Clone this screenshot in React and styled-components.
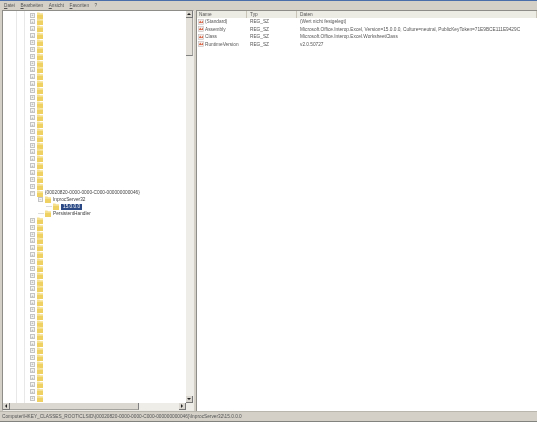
import React from 'react'
import styled, { createGlobalStyle } from 'styled-components'

const GlobalStyle = createGlobalStyle`
  html, body {
    margin: 0;
    padding: 0;
    background: #fff;
    overflow: hidden;
  }
`

const Window = styled.div`
  width: 537px;
  height: 426px;
  display: flex;
  flex-direction: column;
  font-family: Tahoma, "Liberation Sans", Arial, sans-serif;
  font-size: 4.75px;
  color: #333;
  filter: blur(0.35px);
`

const TitleEdge = styled.div`
  height: 1px;
  background: #4a6ea9;
`

const Menu = styled.div`
  height: 9px;
  display: flex;
  align-items: center;
  gap: 5.5px;
  padding-left: 4px;
  background: #d4d0c8;
  font-size: 4.7px;
  color: #555;
`

const MenuItem = styled.span`
  &::first-letter {
    text-decoration: underline;
  }
`

const Panes = styled.div`
  height: 401px;
  display: flex;
  gap: 2px;
  padding-left: 2px;
  background: #d4d0c8;
`

const TreePane = styled.div`
  width: 192px;
  display: grid;
  grid-template-columns: 1fr 7px;
  grid-template-rows: 1fr 7px;
  border: 1px solid #8f8d87;
  border-bottom-color: #eeece6;
  border-right-color: #eeece6;
  box-sizing: border-box;
  background: #fff;
  min-height: 0;
`

const TreeBody = styled.div`
  overflow: hidden;
  min-height: 0;
  padding-top: 0.7px;
  background-image:
    linear-gradient(#e8e8e8, #e8e8e8),
    linear-gradient(#e8e8e8, #e8e8e8);
  background-size: 1px 100%;
  background-position: 13px 0, 21px 0;
  background-repeat: no-repeat;
`

const TreeRow = styled.div`
  height: 6.85px;
  display: flex;
  align-items: center;
  gap: 1px;
  padding-left: ${p => p.$depth * 8 + 27}px;
`

const Toggle = styled.span`
  width: 5px;
  height: 5px;
  flex: none;
  display: flex;
  align-items: center;
  justify-content: center;
  border: 0.5px solid #c4c4c4;
  box-sizing: border-box;
  background: #f4f4f2;
  font-size: 4px;
  line-height: 1;
  color: #888;
  margin-right: 1px;
`

const Spacer = styled.span`
  width: 6px;
  flex: none;
  border-top: 0.5px solid #dcdcdc;
`

const RowLabel = styled.span`
  white-space: nowrap;
  margin-left: ${p => (p.$selected ? 1 : 0)}px;
  padding: 0 ${p => (p.$selected ? 2 : 1)}px;
  line-height: 6px;
  background: ${p => (p.$selected ? '#2b4a85' : 'transparent')};
  color: ${p => (p.$selected ? '#fff' : '#444')};
`

const VScroll = styled.div`
  display: flex;
  flex-direction: column;
  background: #eeede8;
`

const VThumb = styled.div`
  height: 38px;
  background: #e2e0d9;
  border-right: 0.6px solid #a5a39d;
  border-bottom: 1px solid #808080;
  box-sizing: border-box;
`

const VTrack = styled.div`
  flex: 1;
`

const HScroll = styled.div`
  display: flex;
  background: #eeede8;
`

const HThumb = styled.div`
  width: 129px;
  background: #dad8d0;
  border-right: 1px solid #808080;
  border-bottom: 0.6px solid #a5a39d;
  box-sizing: border-box;
`

const HTrack = styled.div`
  flex: 1;
`

const Corner = styled.div`
  background: #eeede8;
`

const ArrowButton = styled.div`
  width: 7px;
  height: 7px;
  flex: none;
  display: flex;
  align-items: center;
  justify-content: center;
  background: #dad8d0;
  border-right: 0.6px solid #777;
  border-bottom: 0.6px solid #777;
  box-sizing: border-box;
`

const ListPane = styled.div`
  flex: 1;
  background: #fff;
  border-left: 1px solid #8f8d87;
  border-top: 1px solid #8f8d87;
`

const ListGrid = styled.div`
  display: grid;
  grid-template-columns: 50px 50px 1fr;
  grid-template-rows: 7px;
  grid-auto-rows: 7.5px;
  align-items: center;
`

const HeaderCell = styled.div`
  height: 7px;
  line-height: 7px;
  padding-left: ${p => (p.$first ? 2 : 3)}px;
  background: #ecebe4;
  color: #555;
  border-right: 0.6px solid #c8c5b8;
`

const Cell = styled.div`
  display: flex;
  align-items: center;
  gap: 1px;
  padding-left: ${p => (p.$first ? 1 : 3)}px;
  white-space: nowrap;
  color: #555;
`

const StatusBar = styled.div`
  height: 11px;
  box-sizing: border-box;
  display: flex;
  align-items: center;
  padding: 0 0 1px 2px;
  background: #d4d0c8;
  border-top: 1px solid #b9b6ae;
  border-bottom: 1px solid #82827e;
  white-space: nowrap;
  overflow: hidden;
  color: #555;
`

const Folder = () => (
  <svg width="6" height="7" viewBox="0 0 6 7">
    <path d="M0 0.5h2.4l.6.8H6V7H0z" fill="#f5e08f" />
    <path d="M0 3h6v4H0z" fill="#efd063" />
  </svg>
)

const RegIcon = () => (
  <svg width="6" height="6" viewBox="0 0 6 6">
    <rect x="0.3" y="0.3" width="5.4" height="5.4" fill="#f4eeea" stroke="#b9b4b4" strokeWidth="0.5" />
    <path d="M1 3.6L2.4 1.5l1 2L5 1.5v2.4H1z" fill="#d9684a" />
  </svg>
)

const Arrow = ({ dir }) => (
  <svg width="4" height="4" viewBox="0 0 4 4">
    {dir === 'up' && <path d="M2 1L4 3H0z" fill="#222" />}
    {dir === 'down' && <path d="M2 3L4 1H0z" fill="#222" />}
    {dir === 'left' && <path d="M1 2L3 0v4z" fill="#222" />}
    {dir === 'right' && <path d="M3 2L1 0v4z" fill="#222" />}
  </svg>
)

const buildTree = () => {
  const rows = []
  for (let i = 0; i < 26; i++) rows.push({ depth: 0, toggle: '+' })
  rows.push({ depth: 0, toggle: '-', label: '{00020820-0000-0000-C000-000000000046}' })
  rows.push({ depth: 1, toggle: '-', label: 'InprocServer32' })
  rows.push({ depth: 2, label: '15.0.0.0', selected: true })
  rows.push({ depth: 1, label: 'PersistentHandler' })
  for (let i = 0; i < 27; i++) rows.push({ depth: 0, toggle: '+' })
  return rows
}

const values = [
  ['(Standard)', 'REG_SZ', '(Wert nicht festgelegt)'],
  ['Assembly', 'REG_SZ', 'Microsoft.Office.Interop.Excel, Version=15.0.0.0, Culture=neutral, PublicKeyToken=71E9BCE111E9429C'],
  ['Class', 'REG_SZ', 'Microsoft.Office.Interop.Excel.WorksheetClass'],
  ['RuntimeVersion', 'REG_SZ', 'v2.0.50727'],
]

const menuItems = ['Datei', 'Bearbeiten', 'Ansicht', 'Favoriten', '?']

const App = () => (
  <Window>
    <GlobalStyle />
    <TitleEdge />
    <Menu>
      {menuItems.map(item => (
        <MenuItem key={item}>{item}</MenuItem>
      ))}
    </Menu>
    <Panes>
      <TreePane>
        <TreeBody>
          {buildTree().map((row, i) => (
            <TreeRow key={i} $depth={row.depth}>
              {row.toggle ? <Toggle>{row.toggle === '+' ? '+' : '−'}</Toggle> : <Spacer />}
              <Folder />
              {row.label && <RowLabel $selected={row.selected}>{row.label}</RowLabel>}
            </TreeRow>
          ))}
        </TreeBody>
        <VScroll>
          <ArrowButton><Arrow dir="up" /></ArrowButton>
          <VThumb />
          <VTrack />
          <ArrowButton><Arrow dir="down" /></ArrowButton>
        </VScroll>
        <HScroll>
          <ArrowButton><Arrow dir="left" /></ArrowButton>
          <HThumb />
          <HTrack />
          <ArrowButton><Arrow dir="right" /></ArrowButton>
        </HScroll>
        <Corner />
      </TreePane>
      <ListPane>
        <ListGrid>
          <HeaderCell $first>Name</HeaderCell>
          <HeaderCell>Typ</HeaderCell>
          <HeaderCell>Daten</HeaderCell>
          {values.map(([name, type, data]) => (
            <React.Fragment key={name}>
              <Cell $first><RegIcon />{name}</Cell>
              <Cell>{type}</Cell>
              <Cell>{data}</Cell>
            </React.Fragment>
          ))}
        </ListGrid>
      </ListPane>
    </Panes>
    <StatusBar>{'Computer\\HKEY_CLASSES_ROOT\\CLSID\\{00020820-0000-0000-C000-000000000046}\\InprocServer32\\15.0.0.0'}</StatusBar>
  </Window>
)

export default App
